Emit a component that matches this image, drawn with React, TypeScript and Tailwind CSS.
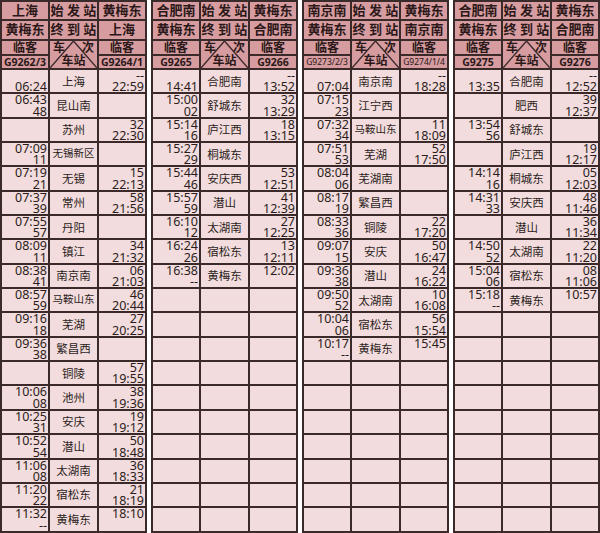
type Cell = [string, string];
type Stop = { name: string; left: Cell; right: Cell };
type Table = {
  from: [string, string];
  to: [string, string];
  trainL: string;
  trainR: string;
  smallTrain?: boolean;
  stops: Stop[];
};

const E: Cell = ["", ""];

const s = (name: string, left: Cell, right: Cell): Stop => ({ name, left, right });

const tables: Table[] = [
  {
    from: ["上海", "黄梅东"],
    to: ["黄梅东", "上海"],
    trainL: "G9262/3",
    trainR: "G9264/1",
    stops: [
      s("上海", ["", "06:24"], ["--", "22:59"]),
      s("昆山南", ["06:43", "48"], E),
      s("苏州", E, ["32", "22:30"]),
      s("无锡新区", ["07:09", "11"], E),
      s("无锡", ["07:19", "21"], ["15", "22:13"]),
      s("常州", ["07:37", "39"], ["58", "21:56"]),
      s("丹阳", ["07:55", "57"], E),
      s("镇江", ["08:09", "11"], ["34", "21:32"]),
      s("南京南", ["08:38", "41"], ["06", "21:03"]),
      s("马鞍山东", ["08:57", "59"], ["46", "20:44"]),
      s("芜湖", ["09:16", "18"], ["27", "20:25"]),
      s("繁昌西", ["09:36", "38"], E),
      s("铜陵", E, ["57", "19:55"]),
      s("池州", ["10:06", "08"], ["38", "19:36"]),
      s("安庆", ["10:25", "31"], ["19", "19:12"]),
      s("潜山", ["10:52", "54"], ["50", "18:48"]),
      s("太湖南", ["11:06", "08"], ["36", "18:33"]),
      s("宿松东", ["11:20", "22"], ["21", "18:19"]),
      s("黄梅东", ["11:32", "--"], ["18:10", ""]),
    ],
  },
  {
    from: ["合肥南", "黄梅东"],
    to: ["黄梅东", "合肥南"],
    trainL: "G9265",
    trainR: "G9266",
    stops: [
      s("合肥南", ["", "14:41"], ["--", "13:52"]),
      s("舒城东", ["15:00", "02"], ["32", "13:29"]),
      s("庐江西", ["15:14", "16"], ["18", "13:15"]),
      s("桐城东", ["15:27", "29"], E),
      s("安庆西", ["15:44", "46"], ["53", "12:51"]),
      s("潜山", ["15:57", "59"], ["41", "12:39"]),
      s("太湖南", ["16:10", "12"], ["27", "12:25"]),
      s("宿松东", ["16:24", "26"], ["13", "12:11"]),
      s("黄梅东", ["16:38", "--"], ["12:02", ""]),
    ],
  },
  {
    from: ["南京南", "黄梅东"],
    to: ["黄梅东", "南京南"],
    trainL: "G9273/2/3",
    trainR: "G9274/1/4",
    smallTrain: true,
    stops: [
      s("南京南", ["", "07:04"], ["--", "18:28"]),
      s("江宁西", ["07:15", "23"], E),
      s("马鞍山东", ["07:32", "34"], ["11", "18:09"]),
      s("芜湖", ["07:51", "53"], ["52", "17:50"]),
      s("芜湖南", ["08:04", "06"], E),
      s("繁昌西", ["08:17", "19"], E),
      s("铜陵", ["08:33", "36"], ["22", "17:20"]),
      s("安庆", ["09:07", "15"], ["50", "16:47"]),
      s("潜山", ["09:36", "38"], ["24", "16:22"]),
      s("太湖南", ["09:50", "52"], ["10", "16:08"]),
      s("宿松东", ["10:04", "06"], ["56", "15:54"]),
      s("黄梅东", ["10:17", "--"], ["15:45", ""]),
    ],
  },
  {
    from: ["合肥南", "黄梅东"],
    to: ["黄梅东", "合肥南"],
    trainL: "G9275",
    trainR: "G9276",
    stops: [
      s("合肥南", ["", "13:35"], ["--", "12:52"]),
      s("肥西", E, ["39", "12:37"]),
      s("舒城东", ["13:54", "56"], E),
      s("庐江西", E, ["19", "12:17"]),
      s("桐城东", ["14:14", "16"], ["05", "12:03"]),
      s("安庆西", ["14:31", "33"], ["48", "11:46"]),
      s("潜山", E, ["36", "11:34"]),
      s("太湖南", ["14:50", "52"], ["22", "11:20"]),
      s("宿松东", ["15:04", "06"], ["08", "11:06"]),
      s("黄梅东", ["15:18", "--"], ["10:57", ""]),
    ],
  },
];

const ROWS = 19;

function Times({ cell }: { cell: Cell }) {
  return (
    <div className="bg-[#f2dcdd] flex flex-col justify-between items-end pr-[1px] text-[12.5px] leading-[11px] text-[#2b1c1c]">
      <span>{cell[0]}</span>
      <span>{cell[1]}</span>
    </div>
  );
}

function Timetable({ t }: { t: Table }) {
  const rows: (Stop | null)[] = [...t.stops];
  while (rows.length < ROWS) rows.push(null);
  const head = "bg-[#d69ca0] flex items-center justify-center font-bold text-[#2b1818]";

  return (
    <div className="w-[147px] shrink-0 grid grid-cols-[46px_47px_46px] grid-rows-[17px_18px_13px_12px_repeat(19,22.35px)] gap-[2px] p-[2px] pb-0 bg-[#3b2a2a]">
      <div className={`${head} text-[13px]`}>{t.from[0]}</div>
      <div className={`${head} text-[13px]`}>始 发 站</div>
      <div className={`${head} text-[13px]`}>{t.from[1]}</div>

      <div className={`${head} text-[13px]`}>{t.to[0]}</div>
      <div className={`${head} text-[13px]`}>终 到 站</div>
      <div className={`${head} text-[13px]`}>{t.to[1]}</div>

      <div className={`${head} text-[12px]`}>临客</div>
      <div className="bg-[#d69ca0] row-span-2 relative text-[#2b1818] text-[12px] leading-[12px] font-bold">
        <svg className="absolute inset-0" width="47" height="27" viewBox="0 0 47 27">
          <polyline points="0,27 23.5,0 47,27" fill="none" stroke="#3b2a2a" strokeWidth="1.4" />
        </svg>
        <span className="absolute left-[3px] top-[1px]">车</span>
        <span className="absolute right-[3px] top-[1px]">次</span>
        <span className="absolute left-0 right-0 bottom-[1px] text-center">车站</span>
      </div>
      <div className={`${head} text-[12px]`}>临客</div>

      <div className={`${head} ${t.smallTrain ? "text-[8.5px] font-normal" : "text-[10.5px]"} leading-[12px]`}>
        {t.trainL}
      </div>
      <div className={`${head} ${t.smallTrain ? "text-[8.5px] font-normal" : "text-[10.5px]"} leading-[12px]`}>
        {t.trainR}
      </div>

      {rows.map((r, i) => (r ? <Row key={i} stop={r} /> : <EmptyRow key={i} />))}
    </div>
  );
}

function Row({ stop }: { stop: Stop }) {
  return (
    <>
      <Times cell={stop.left} />
      <div
        className={`bg-[#f2dcdd] flex items-center justify-center text-[#2b1c1c] ${
          stop.name.length > 3 ? "text-[10.5px]" : "text-[11.5px]"
        }`}
      >
        {stop.name}
      </div>
      <Times cell={stop.right} />
    </>
  );
}

function EmptyRow() {
  return (
    <>
      <div className="bg-[#f2dcdd]" />
      <div className="bg-[#f2dcdd]" />
      <div className="bg-[#f2dcdd]" />
    </>
  );
}

export default function App() {
  return (
    <div
      className="w-[600px] h-[533px] overflow-hidden bg-white flex gap-[4px]"
      style={{ fontFamily: '"Noto Sans", "Noto Sans CJK SC", sans-serif' }}
    >
      {tables.map((t, i) => (
        <Timetable key={i} t={t} />
      ))}
    </div>
  );
}
